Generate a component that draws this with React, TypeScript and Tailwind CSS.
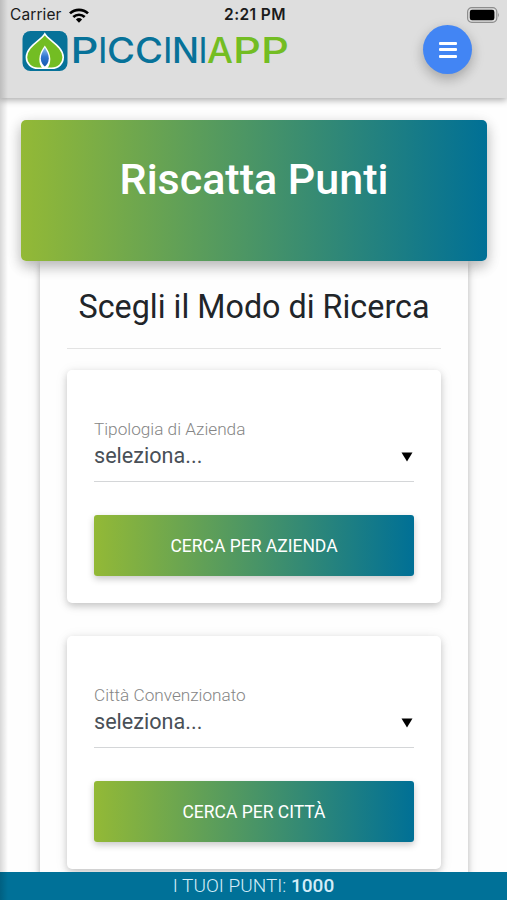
import { useState } from 'react'

interface SearchCardProps {
  label: string
  action: string
}

const searches: SearchCardProps[] = [
  { label: 'Tipologia di Azienda', action: 'Cerca per Azienda' },
  { label: 'Città Convenzionato', action: 'Cerca per Città' },
]

// lettere larghe del marchio: posizione e larghezza di ognuna
const wordmark = [
  { char: 'P', x: 48.5, width: 28, color: '#077299' },
  { char: 'I', x: 76.5, width: 8.5, color: '#077299' },
  { char: 'C', x: 85, width: 28, color: '#077299' },
  { char: 'C', x: 113, width: 28, color: '#077299' },
  { char: 'I', x: 141.5, width: 8.5, color: '#077299' },
  { char: 'N', x: 150, width: 27, color: '#077299' },
  { char: 'I', x: 177, width: 8, color: '#077299' },
  { char: 'A', x: 185, width: 26, color: '#73bd23' },
  { char: 'P', x: 211, width: 28, color: '#73bd23' },
  { char: 'P', x: 239, width: 28, color: '#73bd23' },
]

function StatusBar() {
  return (
    <div className="grid h-[30px] grid-cols-[1fr_auto_1fr] items-center pr-[7px] pl-[10px] font-['Inter',sans-serif] text-[#1a1a1a]">
      <div className="flex items-center gap-[7px]">
        <span className="text-[15.5px] tracking-[0.1px]">Carrier</span>
        <svg className="h-[15px] w-[20px]" viewBox="0 0 20 15" fill="none" stroke="#000" strokeWidth="2.7">
          <path d="M1 5.4a13 13 0 0 1 18 0" />
          <path d="M4.3 9a8.3 8.3 0 0 1 11.4 0" />
          <path d="M10 14.7 6.9 11.5a4.5 4.5 0 0 1 6.2 0Z" fill="#000" stroke="none" />
        </svg>
      </div>
      <span className="text-[15.5px] font-semibold tracking-[0.4px]">2:21 PM</span>
      <svg className="h-[16px] w-[33px] justify-self-end" viewBox="0 0 33 16">
        <rect x="0.6" y="0.6" width="29.2" height="14.8" rx="4.2" fill="none" stroke="#8d8d8d" strokeWidth="1.2" />
        <rect x="2.8" y="2.8" width="24.6" height="10.4" rx="2.2" fill="#000" />
        <path d="M31 5.6q1.8 2.4 0 4.8Z" fill="#8d8d8d" />
      </svg>
    </div>
  )
}

function Logo() {
  return (
    <svg className="h-[42px] w-[268px]" viewBox="0 0 268 42">
      <defs>
        <linearGradient id="flame" x1="0" y1="0" x2="0" y2="1">
          <stop offset="0" stopColor="#8fc4ee" />
          <stop offset="0.5" stopColor="#2f74cf" />
          <stop offset="1" stopColor="#1659ae" />
        </linearGradient>
      </defs>
      <rect x="0.5" y="1" width="45" height="40" rx="8" fill="#077299" />
      <path
        d="M22.8 3.8C19 10.5 4.4 16.5 4.4 27.3c0 6.2 4.6 10.9 11.6 10.9h13.6c7 0 11.6-4.7 11.6-10.9C41.2 16.5 26.6 10.5 22.8 3.8Z"
        fill="#73bd23"
        stroke="#fff"
        strokeWidth="1.6"
      />
      <path d="M22.8 15.5c-3 4.2-5.500 8.600-5.500 13.500 0 4 1.300 7.500 3 9.200h5c1.700-1.700 3-5.200 3-9.200 0-4.900-2.500-9.300-5.500-13.500Z" fill="#fff" />
      <path d="M22.8 17.500c-2 3.500-4 7-4 11 0 3.700 2.200 6.700 4 8 1.800-1.300 4-4.300 4-8 0-4-2-7.500-4-11Z" fill="url(#flame)" />
      <text y="33" fontFamily="Inter, sans-serif" fontWeight="500" fontSize="35">
        {wordmark.map((l, i) => (
          <tspan key={i} x={l.x} textLength={l.width} lengthAdjust="spacingAndGlyphs" fill={l.color}>
            {l.char}
          </tspan>
        ))}
      </text>
    </svg>
  )
}

function SearchCard({ label, action }: SearchCardProps) {
  return (
    <section className="h-[233px] rounded-[5px] bg-white px-[27px] pt-[47px] shadow-[0_3px_7px_rgba(0,0,0,0.18),0_2px_14px_rgba(0,0,0,0.08)]">
      <label className="block text-[17.2px] leading-[24px] font-light text-[#858585]">{label}</label>
      <div className="flex h-[41px] items-start justify-between border-b-[1.5px] border-[#d4d6d8] pr-px">
        <span className="pt-px text-[21.6px] leading-[28px] text-[#495057]">seleziona...</span>
        <svg className="mt-[11px] h-[10px] w-[12px]" viewBox="0 0 12 10">
          <path d="M0.500 0.500h11L6 9.500Z" fill="#000" />
        </svg>
      </div>
      <button className="mt-[33px] block h-[61px] w-full rounded-[3px] bg-linear-to-r/srgb from-[#93b936] to-[#007096] pt-px text-[17.5px] text-white uppercase shadow-[0_3px_7px_rgba(0,0,0,0.22)]">
        {action}
      </button>
    </section>
  )
}

export default function App() {
  const [points] = useState(1000)

  return (
    <div className="relative flex h-[900px] w-full flex-col overflow-hidden bg-[#fefefe] font-['Roboto',sans-serif]">
      <header className="h-[98px] shrink-0 bg-[#dedede] shadow-[0_2px_7px_rgba(0,0,0,0.35)]">
        <StatusBar />
        <div className="flex items-start justify-between pr-[35px] pl-[22px]">
          <Logo />
          <button
            aria-label="Menu"
            className="-mt-[5px] flex h-[49px] w-[49px] flex-col items-center justify-center gap-[3.5px] rounded-full bg-[#4285f4] shadow-[0_5px_11px_rgba(0,0,0,0.16),0_4px_15px_rgba(0,0,0,0.12)]"
          >
            <span className="h-[3px] w-[18px] rounded-[1px] bg-white" />
            <span className="h-[3px] w-[18px] rounded-[1px] bg-white" />
            <span className="h-[3px] w-[18px] rounded-[1px] bg-white" />
          </button>
        </div>
      </header>

      <main className="min-h-0 flex-1 overflow-hidden pt-[22px] pr-[20px] pl-[21px]">
        <div className="relative z-10 h-[141px] rounded-[5px] bg-linear-to-r/srgb from-[#93b936] to-[#007096] pt-[29px] text-center shadow-[0_6px_13px_rgba(0,0,0,0.2),0_4px_16px_rgba(0,0,0,0.12)]">
          <h1 className="text-[43px] leading-[60px] font-medium text-white">Riscatta Punti</h1>
        </div>

        {/* pannello ricerca */}
        <div className="mr-[19px] ml-[19px] h-[700px] bg-[#fefefe] px-[27px] pt-[22px] shadow-[0_2px_6px_rgba(0,0,0,0.24),0_2px_14px_rgba(0,0,0,0.08)]">
          <h2 className="text-center text-[32.3px] leading-[48px] whitespace-nowrap text-[#212529]">Scegli il Modo di Ricerca</h2>
          <hr className="mt-[17px] mb-[21px] border-[#e3e3e3]" />
          <div className="flex flex-col gap-[33px]">
            {searches.map((s) => (
              <SearchCard key={s.label} {...s} />
            ))}
          </div>
        </div>
      </main>

      <footer className="relative z-10 h-[28px] shrink-0 bg-[#007198] text-center text-[19px] leading-[28px] font-light text-[#d3edf8]">
        I TUOI PUNTI: <strong className="font-medium">{points}</strong>
      </footer>

      {/* ombra del menu laterale chiuso */}
      <div className="pointer-events-none absolute inset-y-0 left-0 z-20 w-[8px] bg-linear-to-r from-black/15 to-transparent" />
    </div>
  )
}
